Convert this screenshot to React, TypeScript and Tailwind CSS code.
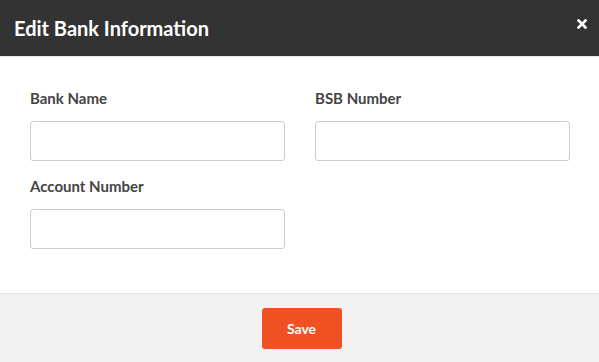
import React from "react";

function Field({ label }: { label: string }) {
  return (
    <div className="flex flex-col">
      <label className="text-[15px] leading-5 font-bold text-[#444444]">{label}</label>
      <input
        type="text"
        className="mt-[13px] h-10 w-[255px] rounded-[3px] border border-[#cccccc] bg-white px-3 outline-none"
      />
    </div>
  );
}

export default function App() {
  return (
    <div className="flex h-[362px] w-[599px] overflow-hidden bg-white font-['Lato',sans-serif]">
      <div className="flex w-px flex-col bg-[#8a8a8a]">
        <div className="h-8 bg-[#8b2a17]" />
      </div>
      <div className="flex flex-1 flex-col">
        <div className="flex h-[57px] items-center justify-between border-b border-[#e6e6e6] bg-[#333333] pl-[14px] pr-[13px]">
          <h2 className="text-[20px] font-bold text-white">Edit Bank Information</h2>
          <button className="mb-[8px] text-white" aria-label="Close">
            <svg width="10" height="10" viewBox="0 0 10 10">
              <path d="M1.5 1.5 L8.5 8.5 M8.5 1.5 L1.5 8.5" stroke="currentColor" strokeWidth="2.6" strokeLinecap="square" />
            </svg>
          </button>
        </div>
        <div className="flex-1 px-[30px] pt-[31px]">
          <div className="grid grid-cols-[255px_255px] gap-x-[30px] gap-y-[15px]">
            <Field label="Bank Name" />
            <Field label="BSB Number" />
            <Field label="Account Number" />
          </div>
        </div>
        <div className="flex h-[69px] justify-center border-t border-[#e4e4e4] bg-[#f2f2f2] pl-[3px] pt-[14px]">
          <button className="h-[41px] w-20 rounded-[3px] bg-[#f05123] text-[14px] font-bold text-white">
            Save
          </button>
        </div>
      </div>
    </div>
  );
}
